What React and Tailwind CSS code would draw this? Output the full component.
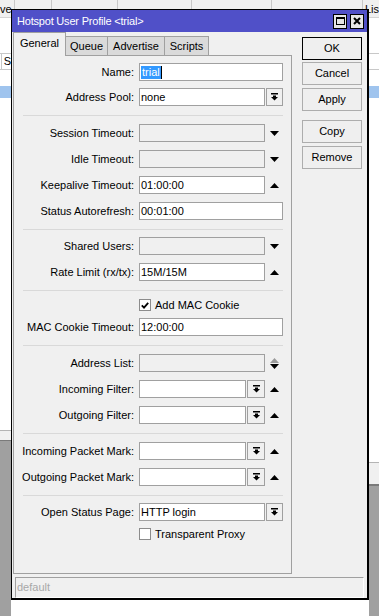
import React from 'react';

const Tri = ({ up = false, fill = '#000' }) => (
  <svg width="9" height="5" viewBox="0 0 9 5">
    <polygon points={up ? '0,5 9,5 4.5,0' : '0,0 9,0 4.5,5'} fill={fill} />
  </svg>
);

const DropIcon = () => (
  <svg width="7" height="8" viewBox="0 0 7 8">
    <rect x="0" y="0" width="7" height="1.5" fill="#000" />
    <rect x="2" y="2.5" width="3" height="1.5" fill="#000" />
    <polygon points="0,4 7,4 3.5,7.5" fill="#000" />
  </svg>
);

const Check = () => (
  <svg width="8" height="7" viewBox="0 0 8 7">
    <polyline points="0.8,3.4 3,5.6 7.2,0.8" fill="none" stroke="#000" strokeWidth="1.8" />
  </svg>
);

const Field = ({ w, disabled, children }) => (
  <div
    className={`${w} h-[18px] shrink-0 border border-[#a0a0a0] ${disabled ? 'bg-[#f0f0f0]' : 'bg-white'} flex items-center pl-[1px] text-black whitespace-nowrap overflow-hidden`}
  >
    {children}
  </div>
);

const DropBtn = ({ w }) => (
  <div className={`${w} h-[18px] shrink-0 ml-[1px] border border-[#a0a0a0] bg-[#f0f0f0] flex items-center justify-center`}>
    <DropIcon />
  </div>
);

const Arrow = ({ up }) => (
  <div className="w-[18px] shrink-0 flex justify-center">
    <Tri up={up} />
  </div>
);

const Row = ({ label, mt, children }) => (
  <div className={`flex items-center h-[18px] ${mt}`}>
    <div className="w-[120px] shrink-0 text-right whitespace-nowrap">{label}</div>
    <div className="ml-[5px] flex items-center">{children}</div>
  </div>
);

const Sep = () => <div className="mt-[9px] h-px w-[260px] ml-[9px] bg-[#d9d9d9]" />;

const CheckRow = ({ mt, checked, label }) => (
  <div className={`flex items-center h-[12px] ${mt}`}>
    <div className="ml-[125px] w-[12px] h-[12px] border border-[#8c8c8c] bg-white flex items-center justify-center">
      {checked && <Check />}
    </div>
    <span className="ml-[4px] leading-none whitespace-nowrap">{label}</span>
  </div>
);

const Button = ({ label, mt, focus }) => (
  <div
    className={`${mt} h-[23px] w-[60px] flex items-center justify-center bg-[#efefef] border ${focus ? 'border-black' : 'border-[#adadad]'}`}
  >
    {label}
  </div>
);

export default function App() {
  return (
    <div className="relative w-[379px] h-[616px] overflow-hidden bg-white text-[11px] text-black font-['Liberation_Sans',Arial,sans-serif]">
      {/* list behind the dialog */}
      <div className="h-[18px] flex bg-[#f0f0f0] border-b border-[#d4d4d4]">
        <div className="w-[15px] border-r border-[#c8c8c8] flex items-center pt-[2px] overflow-hidden">ve</div>
        <div className="w-[38px] border-r border-[#c8c8c8]" />
        <div className="w-[67px] border-r border-[#c8c8c8]" />
        <div className="w-[75px] border-r border-[#c8c8c8]" />
        <div className="w-[82px] border-r border-[#c8c8c8]" />
        <div className="w-[92px] border-r border-[#c8c8c8]" />
        <div className="flex-1 flex items-center pt-[2px] pl-[2px]">Lis</div>
      </div>
      <div className="flex h-[598px]">
        <div className="w-[11px] flex flex-col">
          <div className="h-[35px]" />
          <div className="h-[17px] border-y border-[#c8c8c8] flex">
            <div className="w-[6px] border-r border-[#c8c8c8]" />
            <span className="pl-[2px] leading-[15px]">S</span>
          </div>
          <div className="h-[16px]" />
          <div className="h-[12px] bg-[#9fc4ee]" />
          <div className="h-[332px]" />
          <div className="h-[11px] bg-[#f0f0f0] border-t border-[#b4b4b4] border-b border-b-[#7a7a7a]" />
          <div className="flex-1 bg-[#a0a0a0]" />
        </div>
        <div className="w-[358px]" />
        <div className="flex-1 flex flex-col">
          <div className="h-[35px]" />
          <div className="h-[17px] border-y border-[#c8c8c8]" />
          <div className="h-[16px]" />
          <div className="h-[12px] bg-[#9fc4ee]" />
          <div className="h-[364px]" />
          <div className="h-[24px] bg-[#f0f0f0] border-t border-[#b4b4b4] border-b-2 border-b-[#7a7a7a]" />
          <div className="flex-1 bg-[#a0a0a0]" />
        </div>
      </div>

      {/* dialog window */}
      <div className="absolute left-[11px] top-[9px] w-[358px] h-[591px] border-t border-l border-r-2 border-b-2 border-black bg-[#f0f0f0] flex flex-col">
        <div className="h-[22px] shrink-0 bg-[#5050c8] flex items-center pl-[5px] pr-[3px] text-white text-[11px] tracking-[-0.2px]">
          <span className="flex-1 whitespace-nowrap">Hotspot User Profile &lt;trial&gt;</span>
          <div className="w-[14px] h-[15px] border border-black bg-[#e6e6e6] flex items-center justify-center">
            <div className="w-[9px] h-[8px] border border-black border-t-2" />
          </div>
          <div className="ml-[3px] w-[14px] h-[15px] border border-black bg-[#e6e6e6] flex items-center justify-center">
            <svg width="8" height="8" viewBox="0 0 8 8">
              <path d="M1 1 L7 7 M7 1 L1 7" stroke="#000" strokeWidth="2" />
            </svg>
          </div>
        </div>

        <div className="flex pl-[1px]">
          <div className="w-[279px] flex flex-col">
            {/* tabs */}
            <div className="h-[23px] flex items-start">
              <div className="relative z-10 h-[24px] w-[53px] border border-b-0 border-[#a0a0a0] bg-[#f0f0f0] flex items-center justify-center pb-[2px]">
                General
              </div>
              <div className="mt-[4px] h-[19px] w-[42px] border-t border-r border-[#a0a0a0] bg-[#dadada] flex items-center justify-center">
                Queue
              </div>
              <div className="mt-[4px] h-[19px] w-[57px] border-t border-r border-[#a0a0a0] bg-[#dadada] flex items-center justify-center">
                Advertise
              </div>
              <div className="mt-[4px] h-[19px] w-[44px] border-t border-r border-[#a0a0a0] bg-[#dadada] flex items-center justify-center">
                Scripts
              </div>
            </div>

            {/* panel */}
            <div className="h-[519px] border border-[#a0a0a0] flex flex-col">
              <Row label="Name:" mt="mt-[7px]">
                <Field w="w-[144px]">
                  <span className="bg-[#3399ff] text-white leading-[13px] px-[1px]">trial</span>
                  <span className="w-px h-[13px] bg-black" />
                </Field>
              </Row>
              <Row label="Address Pool:" mt="mt-[7px]">
                <Field w="w-[126px]">none</Field>
                <DropBtn w="w-[17px]" />
              </Row>
              <Sep />
              <Row label="Session Timeout:" mt="mt-[8px]">
                <Field w="w-[126px]" disabled />
                <Arrow />
              </Row>
              <Row label="Idle Timeout:" mt="mt-[8px]">
                <Field w="w-[126px]" disabled />
                <Arrow />
              </Row>
              <Row label="Keepalive Timeout:" mt="mt-[8px]">
                <Field w="w-[126px]">01:00:00</Field>
                <Arrow up />
              </Row>
              <Row label="Status Autorefresh:" mt="mt-[8px]">
                <Field w="w-[144px]">00:01:00</Field>
              </Row>
              <Sep />
              <Row label="Shared Users:" mt="mt-[7px]">
                <Field w="w-[126px]" disabled />
                <Arrow />
              </Row>
              <Row label="Rate Limit (rx/tx):" mt="mt-[8px]">
                <Field w="w-[126px]">15M/15M</Field>
                <Arrow up />
              </Row>
              <Sep />
              <CheckRow mt="mt-[8px]" checked label="Add MAC Cookie" />
              <Row label="MAC Cookie Timeout:" mt="mt-[7px]">
                <Field w="w-[144px]">12:00:00</Field>
              </Row>
              <Sep />
              <Row label="Address List:" mt="mt-[8px]">
                <Field w="w-[126px]" disabled />
                <div className="w-[18px] shrink-0 flex flex-col items-center gap-[1px]">
                  <Tri up fill="#9a9a9a" />
                  <Tri />
                </div>
              </Row>
              <Row label="Incoming Filter:" mt="mt-[8px]">
                <Field w="w-[107px]" />
                <DropBtn w="w-[18px]" />
                <Arrow up />
              </Row>
              <Row label="Outgoing Filter:" mt="mt-[8px]">
                <Field w="w-[107px]" />
                <DropBtn w="w-[18px]" />
                <Arrow up />
              </Row>
              <Sep />
              <Row label="Incoming Packet Mark:" mt="mt-[8px]">
                <Field w="w-[107px]" />
                <DropBtn w="w-[18px]" />
                <Arrow up />
              </Row>
              <Row label="Outgoing Packet Mark:" mt="mt-[8px]">
                <Field w="w-[107px]" />
                <DropBtn w="w-[18px]" />
                <Arrow up />
              </Row>
              <Sep />
              <Row label="Open Status Page:" mt="mt-[7px]">
                <Field w="w-[126px]">HTTP login</Field>
                <DropBtn w="w-[17px]" />
              </Row>
              <CheckRow mt="mt-[7px]" label="Transparent Proxy" />
            </div>
          </div>

          {/* buttons */}
          <div className="ml-[10px] w-[60px] flex flex-col">
            <Button label="OK" mt="mt-[5px]" focus />
            <Button label="Cancel" mt="mt-[2px]" />
            <Button label="Apply" mt="mt-[3px]" />
            <Button label="Copy" mt="mt-[9px]" />
            <Button label="Remove" mt="mt-[3px]" />
          </div>
        </div>

        {/* status bar */}
        <div className="mt-[3px] ml-[3px] w-[349px] h-[21px] border-t border-l border-[#a0a0a0] border-b border-r border-b-white border-r-white flex items-center pl-[1px] text-[#a8a8a8]">
          default
        </div>
      </div>
    </div>
  );
}
